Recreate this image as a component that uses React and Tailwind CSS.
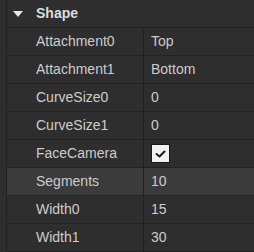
const rows = [
  { name: 'Attachment0', value: 'Top' },
  { name: 'Attachment1', value: 'Bottom' },
  { name: 'CurveSize0', value: '0' },
  { name: 'CurveSize1', value: '0' },
  { name: 'FaceCamera', check: true },
  { name: 'Segments', value: '10', hover: true },
  { name: 'Width0', value: '15' },
  { name: 'Width1', value: '30' },
]

function Row({ row }) {
  return (
    <div className={`flex h-[28px] border-b border-[#222222] ${row.hover ? 'bg-[#3b3b3b]' : ''}`}>
      <div className="w-[137px] shrink-0 border-r border-[#222222] pl-[29px] flex items-center">
        {row.name}
      </div>
      <div className="flex-1 pl-[7px] flex items-center">
        {row.check ? (
          <span className="w-[19px] h-[19px] bg-[#f2f2f2] border border-[#1a1a1a] flex items-center justify-center">
            <svg width="17" height="17" viewBox="0 0 17 17">
              <path d="M4.5 9 L7.5 11.5 L12.5 6.5" fill="none" stroke="#1e1e1e" strokeWidth="2" strokeLinecap="round" strokeLinejoin="round" />
            </svg>
          </span>
        ) : (
          row.value
        )}
      </div>
    </div>
  )
}

export default function App() {
  return (
    <div className="w-[254px] h-[252px] overflow-hidden bg-[#2e2e2e] text-[#cccccc] text-[14px] flex" style={{ fontFamily: '"Liberation Sans", Arial, sans-serif' }}>
      {/* gutter */}
      <div className="w-[7px] shrink-0 border-r border-[#222222]" />

      <div className="flex-1 flex flex-col">
        {/* section header */}
        <div className="h-[28px] border-b border-[#222222] flex items-center">
          <svg width="10" height="6" viewBox="0 0 10 6" className="ml-[6px]">
            <path d="M0 0 H10 L5 6 Z" fill="#e8e8e8" />
          </svg>
          <span className="ml-[13px] font-bold text-[#dddddd]">Shape</span>
        </div>
        {rows.map(r => <Row key={r.name} row={r} />)}
      </div>
    </div>
  )
}
